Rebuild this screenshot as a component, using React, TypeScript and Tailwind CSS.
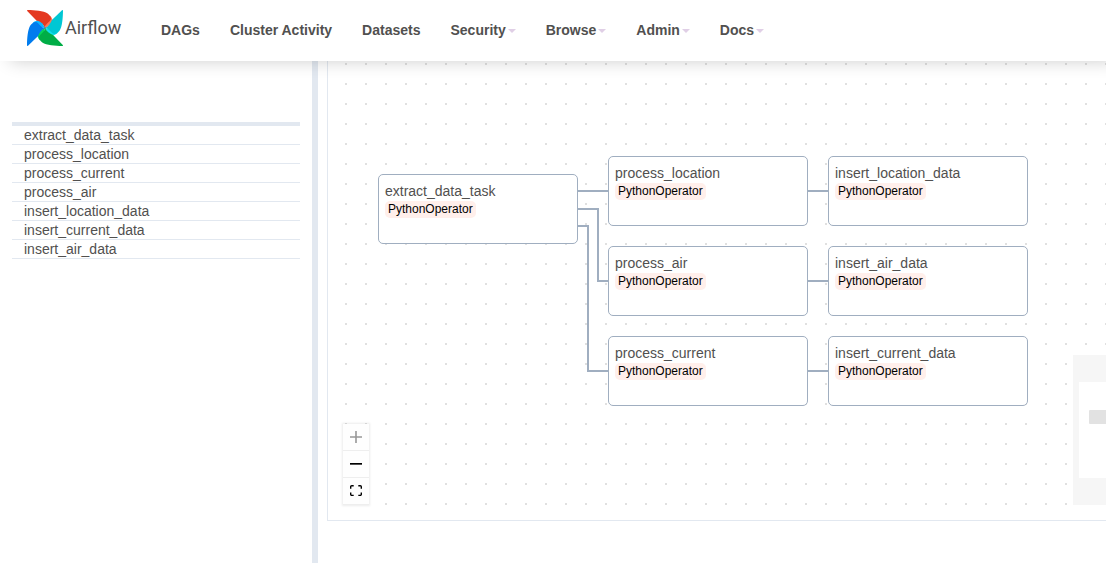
import React from "react";

const menu = [
  { label: "DAGs", dropdown: false },
  { label: "Cluster Activity", dropdown: false },
  { label: "Datasets", dropdown: false },
  { label: "Security", dropdown: true },
  { label: "Browse", dropdown: true },
  { label: "Admin", dropdown: true },
  { label: "Docs", dropdown: true },
];

const tasks = [
  "extract_data_task",
  "process_location",
  "process_current",
  "process_air",
  "insert_location_data",
  "insert_current_data",
  "insert_air_data",
];

const nodes = [
  { id: "extract_data_task", place: "left-[50px] top-[113px]" },
  { id: "process_location", place: "left-[280px] top-[95px]" },
  { id: "insert_location_data", place: "left-[500px] top-[95px]" },
  { id: "process_air", place: "left-[280px] top-[185px]" },
  { id: "insert_air_data", place: "left-[500px] top-[185px]" },
  { id: "process_current", place: "left-[280px] top-[275px]" },
  { id: "insert_current_data", place: "left-[500px] top-[275px]" },
];

const edges = [
  "M250 130H280",
  "M250 148H270V220H280",
  "M250 165H260V310H280",
  "M480 130H500",
  "M480 220H500",
  "M480 310H500",
];

const blades = [
  { turn: 0, main: "#e43921", fold: "#ff7557" },
  { turn: 90, main: "#00c7d4", fold: "#11e1ee" },
  { turn: 180, main: "#00ad46", fold: "#04d659" },
  { turn: 270, main: "#017cee", fold: "#0cb6ff" },
];

function Pinwheel() {
  return (
    <svg viewBox="0 0 24 24" className="size-9" aria-hidden="true">
      {blades.map((b) => (
        <g key={b.turn} transform={`rotate(${b.turn} 12 12)`}>
          <path fill={b.fold} d="M12 12L13.500 5L15.400 3.800C16.500 4.900 17 6 16.900 7.200C16.300 9.400 14.500 11 12 12Z" />
          <path
            fill={b.main}
            d="M.42 0C5.150.07 11 .45 13.800 2.300C15.800 3.800 16.800 5.800 15.200 7.400C13.700 8.900 12.200 9.800 12 12C11 9.700 9 8.400 6.600 7.400L.150.680C-.120.400.050 0 .420 0Z"
          />
        </g>
      ))}
      <circle cx="12" cy="12" r=".5" fill="#51504f" />
    </svg>
  );
}

function Header() {
  return (
    <header className="relative z-10 -mr-5 flex h-[61px] shrink-0 items-center bg-white shadow-[0_10px_18px_-10px_rgba(0,0,0,0.2)]">
      <a href="#home" className="mb-[5px] ml-[27px] flex w-[119px] items-center gap-[2px]">
        <Pinwheel />
        <span className="font-[Roboto,sans-serif] text-lg leading-6">Airflow</span>
      </a>
      <nav className="mb-[2px] flex text-sm leading-5 font-bold whitespace-nowrap">
        {menu.map((m) =>
          m.dropdown ? (
            <button key={m.label} type="button" className="flex items-center gap-[2px] px-[15px]">
              {m.label}
              <svg viewBox="0 0 8 4" className="mt-[2px] h-1 w-2" aria-hidden="true">
                <path d="M0 0H8L4 4Z" fill="#e0cfe6" />
              </svg>
            </button>
          ) : (
            <a key={m.label} href="#menu" className="px-[15px]">
              {m.label}
            </a>
          ),
        )}
      </nav>
    </header>
  );
}

function Controls() {
  const button = "box-content flex size-[26px] items-center justify-center";
  return (
    <div className="absolute bottom-[15px] left-[15px] flex flex-col divide-y divide-[#eeeeee] border-b border-[#eeeeee] bg-[#fefefe] shadow-[0_0_2px_1px_rgba(0,0,0,0.08)]">
      <button type="button" aria-label="Zoom in" disabled className={button}>
        <svg viewBox="0 0 32 32" className="size-3 opacity-40">
          <path d="M32 18.133H18.133V32h-4.266V18.133H0v-4.266h13.867V0h4.266v13.867H32z" />
        </svg>
      </button>
      <button type="button" aria-label="Zoom out" className={button}>
        <svg viewBox="0 0 32 5" className="h-[2px] w-3" preserveAspectRatio="none">
          <path d="M0 0h32v4.200H0z" />
        </svg>
      </button>
      <button type="button" aria-label="Fit view" className={button}>
        <svg viewBox="0 0 32 30" className="size-3" preserveAspectRatio="xMidYMin meet">
          <path d="M3.692 4.630c0-.53.4-.938.939-.938h5.215V0H4.708C2.130 0 0 2.054 0 4.630v5.216h3.692V4.631zM27.354 0h-5.200v3.692h5.170c.53 0 .984.4.984.939v5.215H32V4.631A4.624 4.624 0 0027.354 0zm.954 24.830c0 .532-.4.940-.939.940h-5.215v3.768h5.215c2.577 0 4.631-2.130 4.631-4.707v-5.139h-3.692v5.139zm-23.677.940c-.531 0-.939-.4-.939-.940v-5.138H0v5.139c0 2.577 2.130 4.707 4.708 4.707h5.138V25.770H4.631z" />
        </svg>
      </button>
    </div>
  );
}

function MiniMap() {
  return (
    <svg
      viewBox="0 0 200 150"
      className="absolute right-[-167px] bottom-[15px] h-[150px] w-[200px] bg-white"
      aria-label="Mini map"
      role="img"
    >
      <g fill="#e2e2e2">
        <rect x="16" y="55" width="40" height="14" rx="1" />
        <rect x="62" y="51" width="40" height="14" rx="1" />
        <rect x="62" y="69" width="40" height="14" rx="1" />
        <rect x="106" y="51" width="40" height="14" rx="1" />
      </g>
      <path d="M0 0H200V150H0ZM6 27V123H194V27Z" fill="#f6f6f6" fillRule="evenodd" />
    </svg>
  );
}

function Graph() {
  return (
    <section
      aria-label="Graph"
      className="relative ml-[9px] h-[460px] min-w-0 flex-1 overflow-hidden border-b border-l border-[#e2e8f0] bg-white"
    >
      <svg className="absolute inset-0 size-full" aria-hidden="true">
        <defs>
          <pattern id="dots" x="17" y="2" width="20" height="20" patternUnits="userSpaceOnUse">
            <rect width="2" height="2" fill="#e0e0e0" />
          </pattern>
        </defs>
        <rect width="100%" height="100%" fill="url(#dots)" />
        <g fill="none" stroke="#a0aec0" strokeWidth="2">
          {edges.map((d) => (
            <path key={d} d={d} />
          ))}
        </g>
      </svg>
      {nodes.map((n) => (
        <div
          key={n.id}
          className={
            "absolute flex h-[70px] w-[200px] flex-col items-start rounded-[5px] border border-[#a0aec0] bg-white p-[6px] " +
            n.place
          }
        >
          <span className="text-sm leading-5">{n.id}</span>
          <span className="rounded-[5px] bg-[#ffefeb] px-[3px] text-xs leading-[17px] text-black">
            PythonOperator
          </span>
        </div>
      ))}
      <Controls />
      <MiniMap />
    </section>
  );
}

export default function App() {
  return (
    <div className="flex min-h-screen flex-col overflow-hidden bg-white font-['Liberation_Sans',Arial,sans-serif] text-[#51504f]">
      <Header />
      <main className="flex flex-1">
        <aside className="w-[312px] shrink-0 px-3 pt-[61px]">
          <ul className="border-t-4 border-[#e2e8f0]">
            {tasks.map((t) => (
              <li key={t} className="border-b border-[#e2e8f0] pl-3 text-sm leading-[18px]">
                {t}
              </li>
            ))}
          </ul>
        </aside>
        <div className="w-[6px] shrink-0 bg-[#e2e8f0]" />
        <Graph />
      </main>
    </div>
  );
}
